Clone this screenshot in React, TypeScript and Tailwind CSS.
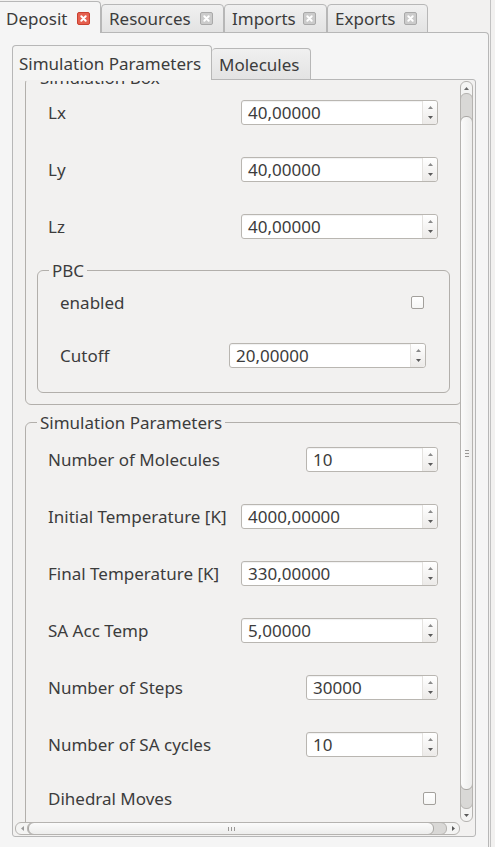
import React from "react";

function Close({ red = false }: { red?: boolean }) {
  return (
    <svg width="13" height="13" viewBox="0 0 13 13" className="block shrink-0">
      <rect x="0.5" y="0.5" width="12" height="12" rx="1.5" fill={red ? "#e5604f" : "#cbcbcb"} stroke={red ? "#c9402f" : "#a9a9a9"} />
      <path d="M4.3 4.3L8.7 8.7M8.7 4.3L4.3 8.7" stroke="#ffffff" strokeWidth="2" strokeLinecap="round" />
    </svg>
  );
}

function UpArrow({ color = "#8a8a8a" }: { color?: string }) {
  return (
    <svg width="5" height="3" viewBox="0 0 5 3" className="block">
      <path d="M0 3L2.5 0L5 3Z" fill={color} />
    </svg>
  );
}
function DownArrow({ color = "#5a5a5a" }: { color?: string }) {
  return (
    <svg width="5" height="3" viewBox="0 0 5 3" className="block">
      <path d="M0 0L5 0L2.5 3Z" fill={color} />
    </svg>
  );
}
function LeftArrow() {
  return (
    <svg width="3" height="5" viewBox="0 0 3 5" className="block">
      <path d="M3 0L0 2.5L3 5Z" fill="#9a9a9a" />
    </svg>
  );
}
function RightArrow() {
  return (
    <svg width="3" height="5" viewBox="0 0 3 5" className="block">
      <path d="M0 0L3 2.5L0 5Z" fill="#5a5a5a" />
    </svg>
  );
}

function SpinBox({ value, wide = true }: { value: string; wide?: boolean }) {
  return (
    <div
      className={
        (wide ? "w-[197px]" : "w-[132px]") +
        " flex h-[25px] shrink-0 rounded-[3px] border border-[#b9b6b1] bg-white shadow-[inset_0_1px_1px_rgba(0,0,0,0.06)]"
      }
    >
      <div className="flex flex-1 items-center pl-[6px] text-[17px] leading-none text-[#3c3c3c]">{value}</div>
      <div className="flex w-[15px] flex-col items-center justify-between rounded-r-[3px] border-l border-[#e4e2df] bg-gradient-to-b from-white to-[#eceae8] pt-[5px] pb-[5px]">
        <UpArrow />
        <DownArrow />
      </div>
    </div>
  );
}

function CheckBox() {
  return <div className="mr-[2px] h-[13px] w-[13px] shrink-0 rounded-[2px] border border-[#a3a09c] bg-gradient-to-b from-white to-[#f6f6f5]" />;
}

function Row({ label, children, extra = "" }: { label: string; children: React.ReactNode; extra?: string }) {
  return (
    <div className={"flex h-[25px] items-center justify-between pl-[11px] pr-[12px] " + extra}>
      <span className="text-[17px] leading-none whitespace-nowrap text-[#3c3c3c]">{label}</span>
      {children}
    </div>
  );
}

function OuterTab({ label, active = false, w }: { label: string; active?: boolean; w: string }) {
  if (active) {
    return (
      <div className={w + " flex h-[32px] items-center justify-between rounded-tr-[4px] border-t border-r border-[#b7b7b7] bg-[#f5f5f5] pt-[2px] pl-[6px] pr-[10px]"}>
        <span className="text-[17px] leading-none text-[#3c3c3c]">{label}</span>
        <Close red />
      </div>
    );
  }
  return (
    <div className={w + " flex h-[29px] items-center justify-between rounded-t-[4px] border border-[#b7b7b7] bg-gradient-to-b from-[#f0f0f0] to-[#e3e3e3] pl-[7px] pr-[10px]"}>
      <span className="-mt-px text-[17px] leading-none text-[#3c3c3c]">{label}</span>
      <Close />
    </div>
  );
}

export default function App() {
  return (
    <div className="flex h-[847px] w-[495px] overflow-hidden bg-[#f2f1f0] font-['Noto_Sans',sans-serif] text-[#3c3c3c]">
      <div className="flex w-[489px] flex-col">
        {/* outer tabs */}
        <div className="relative z-10 flex h-[33px] items-end">
          <OuterTab label="Deposit" active w="w-[101px]" />
          <OuterTab label="Resources" w="w-[123px]" />
          <OuterTab label="Imports" w="w-[103px]" />
          <OuterTab label="Exports" w="w-[101px]" />
        </div>
        <div className="-mt-px flex-1 rounded-tr-[4px] border-t border-r border-[#b7b7b7] bg-[#f5f5f5] pt-[12px] pl-[12px]">
          {/* inner tabs */}
          <div className="relative z-10 flex h-[35px] items-end">
            <div className="flex h-[35px] w-[200px] items-center rounded-t-[4px] border-t border-l border-r border-[#b7b7b7] bg-[#f4f4f3] pl-[6px]">
              <span className="text-[17px] leading-none text-[#3c3c3c]">Simulation Parameters</span>
            </div>
            <div className="flex h-[32px] w-[99px] items-center rounded-t-[4px] border border-l-0 border-[#b7b7b7] bg-gradient-to-b from-[#f0f0f0] to-[#e3e3e3] pl-[7px]">
              <span className="text-[17px] leading-none text-[#3c3c3c]">Molecules</span>
            </div>
          </div>
          {/* inner pane */}
          <div className="-mt-px h-[758px] w-[464px] rounded-b-[3px] rounded-tr-[3px] border border-[#b7b7b7] bg-[#f2f1f0] pt-[1px] pl-[2px]">
            <div className="grid grid-cols-[445px_13px] grid-rows-[741px_13px]">
              {/* viewport */}
              <div className="overflow-hidden">
                <div className="w-[460px] pl-[10px]">
                  {/* Simulation Box */}
                  <fieldset className="-mt-[13px] w-[437px] rounded-[6px] border border-[#b2afab] px-[11px] pb-[11px]">
                    <legend className="px-[3px] text-[17px] leading-[19px] text-[#3c3c3c]">Simulation Box</legend>
                    <div className="flex flex-col gap-[32px] pt-[13px]">
                      <Row label="Lx"><SpinBox value="40,00000" /></Row>
                      <Row label="Ly"><SpinBox value="40,00000" /></Row>
                      <Row label="Lz"><SpinBox value="40,00000" /></Row>
                    </div>
                    <fieldset className="mt-[22px] rounded-[6px] border border-[#b2afab] px-[11px] pb-[24px]">
                      <legend className="px-[3px] text-[17px] leading-[19px] text-[#3c3c3c]">PBC</legend>
                      <div className="flex flex-col gap-[28px] pt-[10px]">
                        <Row label="enabled"><CheckBox /></Row>
                        <Row label="Cutoff"><SpinBox value="20,00000" /></Row>
                      </div>
                    </fieldset>
                  </fieldset>
                  {/* Simulation Parameters */}
                  <fieldset className="mt-[8px] w-[437px] rounded-[6px] border border-[#b2afab] px-[11px] pb-[20px]">
                    <legend className="px-[3px] text-[17px] leading-[19px] text-[#3c3c3c]">Simulation Parameters</legend>
                    <div className="flex flex-col gap-[32px] pt-[15px]">
                      <Row label="Number of Molecules"><SpinBox value="10" wide={false} /></Row>
                      <Row label="Initial Temperature [K]"><SpinBox value="4000,00000" /></Row>
                      <Row label="Final Temperature [K]"><SpinBox value="330,00000" /></Row>
                      <Row label="SA Acc Temp"><SpinBox value="5,00000" /></Row>
                      <Row label="Number of Steps"><SpinBox value="30000" wide={false} /></Row>
                      <Row label="Number of SA cycles"><SpinBox value="10" wide={false} /></Row>
                      <Row label="Dihedral Moves" extra="-mt-[3px]"><CheckBox /></Row>
                    </div>
                  </fieldset>
                </div>
              </div>
              {/* vertical scrollbar */}
              <div className="flex flex-col overflow-hidden rounded-[6px] border border-[#b5b3b0] bg-[#f4f4f3]">
                <div className="flex h-[11px] shrink-0 items-center justify-center pt-[1px]">
                  <UpArrow color="#6a6a6a" />
                </div>
                <div className="-mx-px flex flex-1 flex-col rounded-[6px] border border-[#b5b3b0] bg-[#d9d8d6]">
                  <div className="h-[22px] shrink-0" />
                  <div className="-mx-px flex flex-1 items-center justify-center rounded-[6px] border border-[#a9a7a4] bg-gradient-to-r from-[#fbfbfb] to-[#ededec]">
                    <div className="flex flex-col gap-[2px]">
                      <div className="h-px w-[4px] bg-[#9a9896]" />
                      <div className="h-px w-[4px] bg-[#9a9896]" />
                      <div className="h-px w-[4px] bg-[#9a9896]" />
                    </div>
                  </div>
                  <div className="h-[18px] shrink-0" />
                </div>
                <div className="flex h-[12px] shrink-0 items-center justify-center">
                  <DownArrow />
                </div>
              </div>
              {/* horizontal scrollbar */}
              <div className="flex overflow-hidden rounded-[6px] border border-[#b5b3b0] bg-[#f4f4f3]">
                <div className="flex w-[11px] shrink-0 items-center justify-center pl-[1px]">
                  <LeftArrow />
                </div>
                <div className="-my-px flex flex-1 rounded-[6px] border border-[#b5b3b0] bg-[#d9d8d6]">
                  <div className="-my-px flex flex-1 items-center justify-center rounded-[6px] border border-[#a9a7a4] bg-gradient-to-b from-[#fbfbfb] to-[#ededec]">
                    <div className="flex gap-[2px]">
                      <div className="h-[4px] w-px bg-[#9a9896]" />
                      <div className="h-[4px] w-px bg-[#9a9896]" />
                      <div className="h-[4px] w-px bg-[#9a9896]" />
                    </div>
                  </div>
                  <div className="w-[12px] shrink-0" />
                </div>
                <div className="flex w-[12px] shrink-0 items-center justify-center">
                  <RightArrow />
                </div>
              </div>
              <div />
            </div>
          </div>
        </div>
      </div>
      <div className="w-px" />
      <div className="w-px bg-[#c2c2c2]" />
    </div>
  );
}
